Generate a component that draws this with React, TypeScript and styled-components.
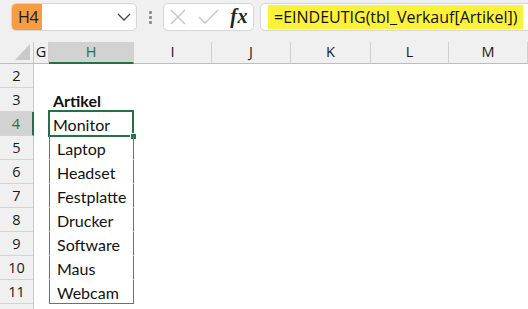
import React from 'react';
import styled, { createGlobalStyle } from 'styled-components';

const GREEN = '#217346';
const BLUE = '#4a72c4';
const CHROME = '#f0f0f0';

const GlobalStyle = createGlobalStyle`
	html, body {
		margin: 0;
		padding: 0;
		background: ${CHROME};
	}
	* {
		box-sizing: border-box;
	}
`;

const Page = styled.div`
	width: 528px;
	height: 309px;
	overflow: hidden;
	background: ${CHROME};
	display: flex;
	flex-direction: column;
	font-family: 'Open Sans', 'Noto Sans', sans-serif;
`;

const Toolbar = styled.div`
	height: 42px;
	flex: none;
	display: flex;
	align-items: flex-start;
	padding: 3px 0 0 11px;
	overflow: hidden;
`;

const RoundBox = styled.div`
	height: 28px;
	flex: none;
	background: #fff;
	border: 1px solid #d6d6d6;
	border-radius: 5px;
	display: flex;
	align-items: center;
`;

const NameBox = styled(RoundBox)`
	width: 126px;
	padding-right: 5px;
`;

const CellRef = styled.div`
	width: 30px;
	height: 26px;
	background: #f89c43;
	border-radius: 4px 0 0 4px;
	color: #1a1a1a;
	font-size: 16px;
	line-height: 26px;
	padding-left: 6px;
	letter-spacing: -0.2px;
`;

const Chevron = styled.svg`
	margin-left: auto;
`;

const Grip = styled.div`
	width: 3px;
	margin: 8px 11px 0 12px;
	display: flex;
	flex-direction: column;
	gap: 2px;
	span {
		width: 3px;
		height: 3px;
		border-radius: 1px;
		background: #8c8c8c;
	}
`;

const FxBox = styled(RoundBox)`
	width: 91px;
	padding: 0 5px 0 6px;
	justify-content: space-between;
`;

const FxLabel = styled.span`
	font-family: 'Liberation Serif', 'DejaVu Serif', serif;
	font-style: italic;
	font-weight: bold;
	font-size: 20px;
	color: #222;
	letter-spacing: 0.5px;
	line-height: 1;
	margin-bottom: 3px;
`;

const FormulaBar = styled(RoundBox)`
	width: 290px;
	margin-left: 6px;
	padding-left: 7px;
`;

const Highlight = styled.div`
	width: 255px;
	height: 24px;
	background: #fdf23a;
	color: #111;
	font-size: 16px;
	line-height: 24px;
	padding-left: 6px;
	white-space: nowrap;
`;

const Sheet = styled.div`
	flex: 1;
	display: grid;
	grid-template-columns: 34px 15px 85px 78px 79px 80px 78px 79px;
	grid-template-rows: 22px repeat(11, 24px);
	background: #fff;
`;

const Corner = styled.div`
	background: ${CHROME};
	border-right: 1px solid #c8c8c8;
	border-bottom: 1px solid #bdbdbd;
	display: flex;
	align-items: flex-end;
	justify-content: flex-end;
	padding: 0 3px 3px 0;
`;

const ColHeader = styled.div<{ $active?: boolean }>`
	background: ${(p) => (p.$active ? '#d2d2d2' : CHROME)};
	color: ${(p) => (p.$active ? GREEN : '#1a1a1a')};
	border-right: 1px solid #d0d0d0;
	border-bottom: ${(p) => (p.$active ? `2px solid ${GREEN}` : '1px solid #bdbdbd')};
	font-size: 14.5px;
	line-height: 20px;
	text-align: center;
`;

const RowHeader = styled.div<{ $active?: boolean }>`
	background: ${(p) => (p.$active ? '#d2d2d2' : CHROME)};
	color: ${(p) => (p.$active ? GREEN : '#1a1a1a')};
	border-right: ${(p) => (p.$active ? `2px solid ${GREEN}` : '1px solid #c8c8c8')};
	border-bottom: 1px solid #d4d4d4;
	font-size: 14.5px;
	line-height: 23px;
	text-align: center;
`;

const Cell = styled.div<{ $spill?: boolean; $spillEnd?: boolean }>`
	position: relative;
	border-left: 1px solid ${(p) => (p.$spill ? BLUE : 'transparent')};
	border-right: 1px solid ${(p) => (p.$spill ? BLUE : 'transparent')};
	border-bottom: 1px solid ${(p) => (p.$spillEnd ? BLUE : 'transparent')};
`;

const CellText = styled.div<{ $bold?: boolean; $indent?: number }>`
	font-family: 'Lato', 'Open Sans', sans-serif;
	font-size: 16px;
	font-weight: ${(p) => (p.$bold ? 700 : 400)};
	color: #111;
	line-height: 24px;
	padding-top: 1px;
	padding-left: ${(p) => p.$indent ?? 3}px;
	white-space: nowrap;
`;

const ActiveOutline = styled.div`
	position: absolute;
	left: -2px;
	right: -1px;
	top: -2px;
	bottom: -2px;
	border: 2px solid ${GREEN};
	pointer-events: none;
`;

const FillHandle = styled.div`
	position: absolute;
	right: -5px;
	bottom: -5px;
	width: 7px;
	height: 7px;
	background: ${GREEN};
	border: 1px solid #fff;
`;

const columns = ['G', 'H', 'I', 'J', 'K', 'L', 'M'];
const items = ['Laptop', 'Headset', 'Festplatte', 'Drucker', 'Software', 'Maus', 'Webcam'];

const cellContent = (row: number) => {
	if (row === 3) return <CellText $bold>Artikel</CellText>;
	if (row === 4) return <CellText $indent={3}>Monitor</CellText>;
	if (row > 4 && row <= 11) return <CellText $indent={7}>{items[row - 5]}</CellText>;
	return null;
};

const App = () => {
	const rows = Array.from({ length: 11 }, (_, i) => i + 2);
	return (
		<Page>
			<GlobalStyle />
			<Toolbar>
				<NameBox>
					<CellRef>H4</CellRef>
					<Chevron width='14' height='8' viewBox='0 0 14 8'>
						<polyline points='1,1 7,7 13,1' fill='none' stroke='#444' strokeWidth='1.3' />
					</Chevron>
				</NameBox>
				<Grip>
					<span />
					<span />
					<span />
				</Grip>
				<FxBox>
					<svg width='16' height='16' viewBox='0 0 16 16'>
						<path d='M1 1 L15 15 M15 1 L1 15' stroke='#c4c4c4' strokeWidth='1.4' fill='none' />
					</svg>
					<svg width='21' height='16' viewBox='0 0 21 16'>
						<polyline points='1,8 7,14 20,1' stroke='#c4c4c4' strokeWidth='1.4' fill='none' />
					</svg>
					<FxLabel>fx</FxLabel>
				</FxBox>
				<FormulaBar>
					<Highlight>=EINDEUTIG(tbl_Verkauf[Artikel])</Highlight>
				</FormulaBar>
			</Toolbar>
			<Sheet>
				<Corner>
					<svg width='15' height='16' viewBox='0 0 15 16'>
						<polygon points='15,0 15,16 0,16' fill='#c9c9c9' />
					</svg>
				</Corner>
				{columns.map((c) => (
					<ColHeader key={c} $active={c === 'H'}>
						{c}
					</ColHeader>
				))}
				{rows.map((r) => (
					<React.Fragment key={r}>
						{/* row 12 is only a sliver at the bottom edge, its number falls outside */}
						<RowHeader $active={r === 4}>{r <= 11 ? r : ''}</RowHeader>
						{columns.map((c) =>
							c === 'H' ? (
								<Cell key={c} $spill={r >= 4 && r <= 11} $spillEnd={r === 11}>
									{cellContent(r)}
									{r === 4 && (
										<ActiveOutline>
											<FillHandle />
										</ActiveOutline>
									)}
								</Cell>
							) : (
								<Cell key={c} />
							)
						)}
					</React.Fragment>
				))}
			</Sheet>
		</Page>
	);
};

export default App;
